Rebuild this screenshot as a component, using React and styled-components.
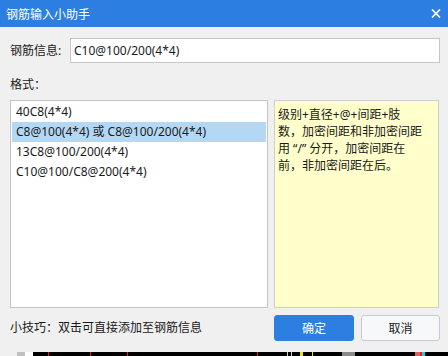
import React, { useState } from 'react';
import styled, { createGlobalStyle } from 'styled-components';

const GlobalStyle = createGlobalStyle`
    html, body {
        margin: 0;
        padding: 0;
        background: #f0f0f0;
    }
    body {
        font-family: "Noto Sans", "Noto Sans CJK SC", sans-serif;
        font-size: 12px;
        color: #1a1a1a;
    }
`;

const Page = styled.div`
    width: 448px;
    height: 356px;
    display: flex;
    flex-direction: column;
    overflow: hidden;
`;

const Dialog = styled.div`
    height: 352px;
    display: flex;
    flex-direction: column;
    background: #f0f0f0;
`;

const TitleBar = styled.div`
    height: 27px;
    flex: none;
    background: #2c7fe0;
    color: #fff;
    display: flex;
    align-items: center;
    justify-content: space-between;
    padding: 0 6px 0 6px;
    font-size: 12px;
`;

const CloseButton = styled.div`
    width: 10px;
    height: 9px;
    display: flex;
    margin-right: 1px;
`;

const Body = styled.div`
    flex: 1;
    display: flex;
    flex-direction: column;
    padding: 0 8px 0 10px;
`;

const FieldRow = styled.div`
    margin-top: 11px;
    height: 25px;
    display: flex;
    align-items: center;
`;

const Label = styled.div`
    width: 60px;
    flex: none;
    line-height: 16px;
`;

const Input = styled.input`
    flex: 1;
    height: 25px;
    box-sizing: border-box;
    border: 1px solid #c6c6c8;
    background: #fff;
    padding: 0 3px;
    font-family: "Noto Sans", "Noto Sans CJK SC", sans-serif;
    font-size: 12px;
    color: #1a1a1a;
    outline: none;
`;

const SectionLabel = styled.div`
    margin-top: 14px;
    margin-bottom: 7px;
    line-height: 16px;
`;

const Content = styled.div`
    height: 208px;
    display: flex;
    gap: 6px;
`;

const List = styled.div`
    width: 258px;
    box-sizing: border-box;
    border: 1px solid #c4c4c4;
    background: #fff;
    padding: 1px;
    display: flex;
    flex-direction: column;
`;

const ListItem = styled.div`
    height: 20px;
    line-height: 20px;
    padding-left: 4px;
    white-space: nowrap;
    background: ${props => props.selected ? '#b4d8f3' : 'transparent'};
    cursor: default;
`;

const Note = styled.div`
    width: 165px;
    box-sizing: border-box;
    border: 1px solid #cfcfcf;
    background: #ffffcc;
    padding: 5px 3px;
    line-height: 17px;
`;

const NoteLine = styled.div`
    white-space: nowrap;
`;

const Footer = styled.div`
    margin-top: 7px;
    height: 26px;
    display: flex;
    align-items: center;
`;

const Tip = styled.div`
    flex: 1;
    line-height: 16px;
`;

const Button = styled.button`
    width: ${props => props.w}px;
    height: 26px;
    box-sizing: border-box;
    border-radius: 3px;
    font-family: "Noto Sans", "Noto Sans CJK SC", sans-serif;
    font-size: 12px;
    padding: 0;
    border: 1px solid ${props => props.primary ? '#2c7fe0' : '#c6cbd6'};
    background: ${props => props.primary ? '#2c7fe0' : '#f7f8fa'};
    color: ${props => props.primary ? '#fff' : '#1a1a1a'};
    margin-left: ${props => props.gap || 0}px;
`;

const Strip = styled.svg`
    display: block;
    width: 448px;
    height: 4px;
    flex: none;
`;

const formats = [
    '40C8(4*4)',
    'C8@100(4*4) 或 C8@100/200(4*4)',
    '13C8@100/200(4*4)',
    'C10@100/C8@200(4*4)',
];

const App = () => {
    const [selected, setSelected] = useState(1);
    const [value, setValue] = useState('C10@100/200(4*4)');

    return (
        <Page>
            <GlobalStyle />
            <Dialog>
                <TitleBar>
                    <span>钢筋输入小助手</span>
                    <CloseButton>
                        <svg width="10" height="9" viewBox="0 0 10 9">
                            <path d="M1 0.5 L9 8.5 M9 0.5 L1 8.5" stroke="#fff" strokeWidth="1.7" />
                        </svg>
                    </CloseButton>
                </TitleBar>
                <Body>
                    <FieldRow>
                        <Label>钢筋信息:</Label>
                        <Input value={value} onChange={e => setValue(e.target.value)} />
                    </FieldRow>
                    <SectionLabel>格式：</SectionLabel>
                    <Content>
                        <List>
                            {formats.map((f, i) => (
                                <ListItem key={f} selected={i === selected} onClick={() => setSelected(i)}>
                                    {f}
                                </ListItem>
                            ))}
                        </List>
                        <Note>
                            <NoteLine>级别+直径+@+间距+肢</NoteLine>
                            <NoteLine>数，加密间距和非加密间距</NoteLine>
                            <NoteLine>用 “/” 分开，加密间距在</NoteLine>
                            <NoteLine>前，非加密间距在后。</NoteLine>
                        </Note>
                    </Content>
                    <Footer>
                        <Tip>小技巧：双击可直接添加至钢筋信息</Tip>
                        <Button primary w={80}>确定</Button>
                        <Button w={79} gap={7}>取消</Button>
                    </Footer>
                </Body>
            </Dialog>
            <Strip viewBox="0 0 448 4">
                <rect x="0" y="0" width="448" height="4" fill="#000" />
                <rect x="0" y="0" width="17" height="4" fill="#f0f0f0" />
                <rect x="17" y="0" width="8" height="4" fill="#c0c0c0" />
                <rect x="25" y="0" width="8" height="4" fill="#ffffff" />
                <rect x="48" y="0" width="1" height="4" fill="#e02020" />
                <rect x="90" y="0" width="1" height="4" fill="#e02020" />
                <rect x="127" y="0" width="1" height="4" fill="#e02020" />
                <rect x="257" y="0" width="1" height="4" fill="#e02020" />
                <rect x="287" y="0" width="1" height="4" fill="#e8e020" />
                <rect x="291" y="0" width="1" height="4" fill="#e8e020" />
                <rect x="300" y="0" width="3" height="4" fill="#e8e020" />
                <rect x="312" y="0" width="1" height="4" fill="#e8e020" />
                <rect x="342" y="0" width="13" height="4" fill="#8a8a8a" />
                <rect x="415" y="0" width="5" height="4" fill="#e06060" />
                <rect x="420" y="0" width="2" height="4" fill="#e02020" />
                <rect x="422" y="0" width="3" height="4" fill="#20d0e0" />
            </Strip>
        </Page>
    );
};

export default App;
